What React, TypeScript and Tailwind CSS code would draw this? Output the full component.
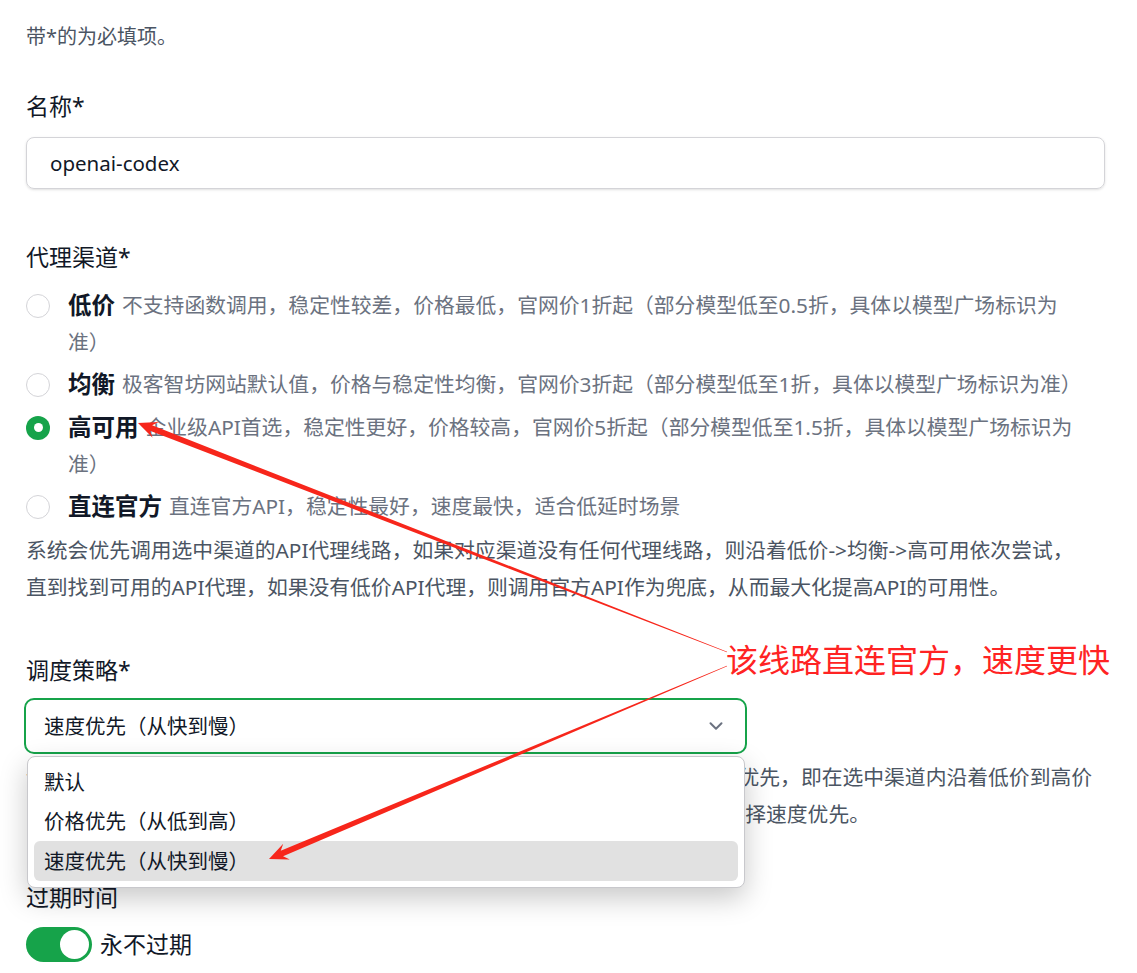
import { ChevronDown } from "lucide-react";

type Pt = [number, number];

// tapered annotation arrow: thin tail, thick shaft, notched head
function arrowPoints(tail: Pt, tip: Pt, tailHalf: number, shaftHalf: number, headLen: number, headHalf: number, innerLen: number) {
  const dx = tip[0] - tail[0];
  const dy = tip[1] - tail[1];
  const len = Math.hypot(dx, dy);
  const ux = dx / len;
  const uy = dy / len;
  const nx = -uy;
  const ny = ux;
  const at = (d: number, w: number): string => `${tip[0] - ux * d + nx * w},${tip[1] - uy * d + ny * w}`;
  return [
    at(len, tailHalf),
    at(innerLen, shaftHalf),
    at(headLen, headHalf),
    at(0, 0),
    at(headLen, -headHalf),
    at(innerLen, -shaftHalf),
    at(len, -tailHalf),
  ].join(" ");
}

function Radio({ checked }: { checked?: boolean }) {
  if (checked) {
    return (
      <span className="mt-[6.5px] flex h-[24px] w-[24px] shrink-0 items-center justify-center rounded-full bg-[#16a34a]">
        <span className="h-[9px] w-[9px] rounded-full bg-white" />
      </span>
    );
  }
  return <span className="mt-[6.5px] h-[24px] w-[24px] shrink-0 rounded-full border border-[#d4d4d8] bg-white" />;
}

const options = [
  {
    name: "低价",
    lines: ["不支持函数调用，稳定性较差，价格最低，官网价1折起（部分模型低至0.5折，具体以模型广场标识为", "准）"],
  },
  {
    name: "均衡",
    lines: ["极客智坊网站默认值，价格与稳定性均衡，官网价3折起（部分模型低至1折，具体以模型广场标识为准）"],
  },
  {
    name: "高可用",
    lines: ["企业级API首选，稳定性更好，价格较高，官网价5折起（部分模型低至1.5折，具体以模型广场标识为", "准）"],
    checked: true,
  },
  {
    name: "直连官方",
    lines: ["直连官方API，稳定性最好，速度最快，适合低延时场景"],
  },
];

export default function App() {
  return (
    <div className="relative h-[973px] w-[1137px] overflow-hidden bg-white font-['Noto_Sans','Noto_Sans_CJK_SC',sans-serif]">
      <div className="pl-[26px] pr-[32px] pt-[18px]">
        <p className="text-[20px] leading-[38px] text-[#4b5563]">带*的为必填项。</p>

        <label className="mt-[32px] block text-[23px] leading-[36px] text-[#111827]">名称*</label>
        <div className="mt-[13px] flex h-[52px] items-center rounded-[8px] border border-[#d4d4d8] px-[23px] text-[20.5px] text-[#111827] shadow-sm">
          openai-codex
        </div>

        <label className="mt-[50px] block text-[23px] leading-[36px] text-[#111827]">代理渠道*</label>
        <div className="mt-[12px] flex flex-col gap-[5.5px]">
          {options.map((o) => (
            <div key={o.name} className="flex items-start gap-[18px]">
              <Radio checked={o.checked} />
              <div className="whitespace-nowrap text-[20.8px] text-[#6b7280]">
                {o.lines.map((l, i) => (
                  <div key={i} className="flex h-[37px] items-center">
                    {i === 0 && <span className="mr-[7px] text-[23.5px] font-bold text-[#111827]">{o.name}</span>}
                    {l}
                  </div>
                ))}
              </div>
            </div>
          ))}
        </div>
        <div className="mt-[6.5px] whitespace-nowrap text-[20.8px] leading-[37px] text-[#4b5563]">
          <div>系统会优先调用选中渠道的API代理线路，如果对应渠道没有任何代理线路，则沿着低价-&gt;均衡-&gt;高可用依次尝试，</div>
          <div>直到找到可用的API代理，如果没有低价API代理，则调用官方API作为兜底，从而最大化提高API的可用性。</div>
        </div>

        <label className="mt-[46px] block text-[23px] leading-[36px] text-[#111827]">调度策略*</label>
        <div className="relative -ml-[2px] mt-[10px] w-[723px]">
          <div className="flex h-[56px] items-center justify-between rounded-[10px] border-2 border-[#16a34a] bg-white pl-[18px] pr-[18px] text-[20.5px] text-[#111827]">
            <span>速度优先（从快到慢）</span>
            <ChevronDown className="h-[22px] w-[22px] text-[#6b7280]" strokeWidth={2.2} />
          </div>
          <div className="absolute left-[3px] top-[58px] z-10 w-[718px] rounded-[8px] border border-[#c8c8cc] bg-white py-[6px] text-[20.5px] text-[#111827] shadow-[0_10px_28px_rgba(0,0,0,0.22)]">
            <div className="mx-[6px] flex h-[39px] items-center rounded-[6px] px-[10px]">默认</div>
            <div className="mx-[6px] flex h-[39px] items-center rounded-[6px] px-[10px]">价格优先（从低到高）</div>
            <div className="mx-[6px] flex h-[40px] items-center rounded-[6px] bg-[#e1e1e1] px-[10px]">速度优先（从快到慢）</div>
          </div>
        </div>
        <div className="mt-[5px] whitespace-nowrap text-[20.8px] leading-[37px] text-[#4b5563]">
          <div>调度策略决定渠道内多条线路的调用顺序，默认按系统配置调用，也可选价格 优先，即在选中渠道内沿着低价到高价</div>
          <div>的顺序调用；速度优先则按API响应速度从快到慢依次尝试，低延时场景建议选择速度优先。</div>
        </div>

        <label className="mt-[46px] block text-[23px] leading-[36px] text-[#111827]">过期时间</label>
        <div className="mt-[12px] flex items-center gap-[8px]">
          <span className="flex h-[35px] w-[66px] items-center justify-end rounded-full bg-[#16a34a] pr-[3px]">
            <span className="h-[29px] w-[29px] rounded-full bg-white" />
          </span>
          <span className="text-[23px] text-[#111827]">永不过期</span>
        </div>
      </div>

      {/* annotation overlay */}
      <svg className="pointer-events-none absolute left-0 top-0 z-20" width="1137" height="973" viewBox="0 0 1137 973">
        <polygon points={arrowPoints([727, 652], [138, 423], 0.4, 3, 19, 8.5, 14)} fill="#f7261b" />
        <polygon points={arrowPoints([727, 666], [269, 859], 0.4, 3, 19, 8.5, 14)} fill="#f7261b" />
      </svg>
      <div className="pointer-events-none absolute left-[726px] top-[640px] z-20 text-[32px] leading-[40px] text-[#ff2323]">
        该线路直连官方，速度更快
      </div>
    </div>
  );
}
